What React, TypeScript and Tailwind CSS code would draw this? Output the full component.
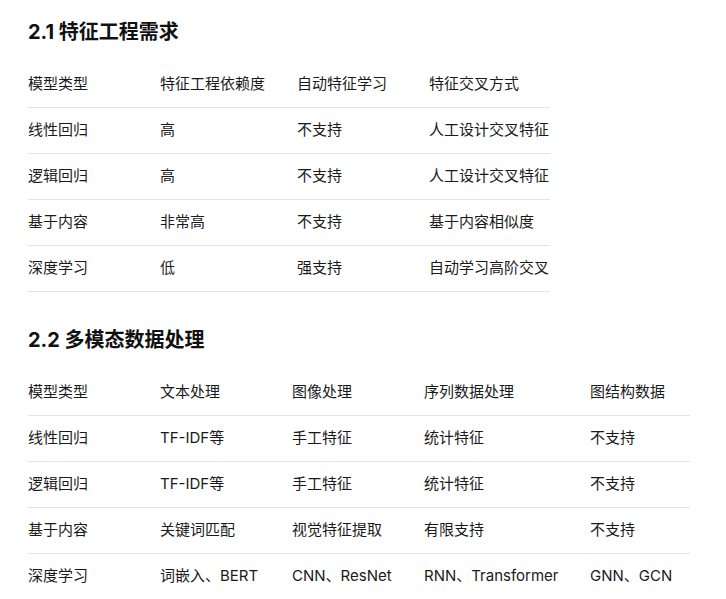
const font = { fontFamily: '"Inter", "Noto Sans CJK SC", sans-serif' };

const featureCols = ['w-[132px]', 'w-[137px]', 'w-[132px]', 'w-[121px]'];
const featureRows = [
  ['模型类型', '特征工程依赖度', '自动特征学习', '特征交叉方式'],
  ['线性回归', '高', '不支持', '人工设计交叉特征'],
  ['逻辑回归', '高', '不支持', '人工设计交叉特征'],
  ['基于内容', '非常高', '不支持', '基于内容相似度'],
  ['深度学习', '低', '强支持', '自动学习高阶交叉'],
];

const modalCols = ['w-[132px]', 'w-[132px]', 'w-[132px]', 'w-[166px]', 'w-[100px]'];
const modalRows = [
  ['模型类型', '文本处理', '图像处理', '序列数据处理', '图结构数据'],
  ['线性回归', 'TF-IDF等', '手工特征', '统计特征', '不支持'],
  ['逻辑回归', 'TF-IDF等', '手工特征', '统计特征', '不支持'],
  ['基于内容', '关键词匹配', '视觉特征提取', '有限支持', '不支持'],
  ['深度学习', '词嵌入、BERT', 'CNN、ResNet', 'RNN、Transformer', 'GNN、GCN'],
];

function Table({ cols, rows }: { cols: string[]; rows: string[][] }) {
  return (
    <div className="flex flex-col w-fit">
      {rows.map((row, i) => (
        <div key={i} className="flex h-[46px] items-center border-b border-[#e3e3e3]">
          {row.map((cell, j) => (
            <div key={j} className={`${cols[j]} shrink-0 whitespace-nowrap`}>
              {cell}
            </div>
          ))}
        </div>
      ))}
    </div>
  );
}

export default function App() {
  return (
    <div className="bg-white min-h-screen px-[28px] pt-[18px] text-[15px] text-[#1a1a1a]" style={font}>
      <h2 className="text-[20px] leading-[28px] font-bold text-[#111] mb-[16px]">2.1 特征工程需求</h2>
      <Table cols={featureCols} rows={featureRows} />
      <h2 className="text-[20px] leading-[28px] font-bold text-[#111] mt-[34px] mb-[16px]">2.2 多模态数据处理</h2>
      <Table cols={modalCols} rows={modalRows} />
    </div>
  );
}
